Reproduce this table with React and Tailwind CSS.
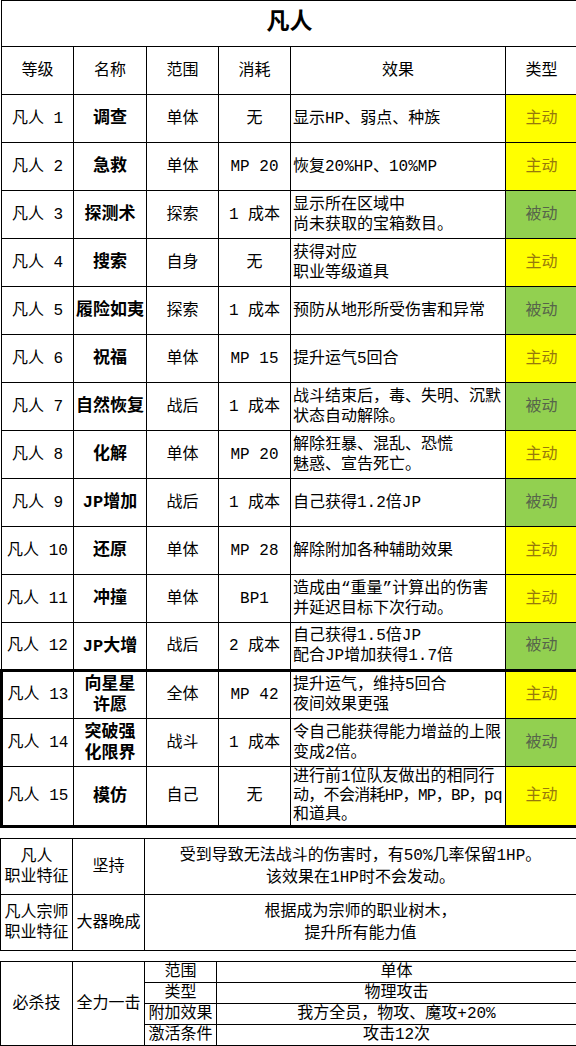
import React from 'react';

const skills = [
    { lv: 1, name: ['调查'], range: '单体', cost: '无', effect: ['显示HP、弱点、种族'], type: '主动' },
    { lv: 2, name: ['急救'], range: '单体', cost: 'MP 20', effect: ['恢复20%HP、10%MP'], type: '主动' },
    { lv: 3, name: ['探测术'], range: '探索', cost: '1 成本', effect: ['显示所在区域中', '尚未获取的宝箱数目。'], type: '被动' },
    { lv: 4, name: ['搜索'], range: '自身', cost: '无', effect: ['获得对应', '职业等级道具'], type: '主动' },
    { lv: 5, name: ['履险如夷'], range: '探索', cost: '1 成本', effect: ['预防从地形所受伤害和异常'], type: '被动' },
    { lv: 6, name: ['祝福'], range: '单体', cost: 'MP 15', effect: ['提升运气5回合'], type: '主动' },
    { lv: 7, name: ['自然恢复'], range: '战后', cost: '1 成本', effect: ['战斗结束后，毒、失明、沉默', '状态自动解除。'], type: '被动' },
    { lv: 8, name: ['化解'], range: '单体', cost: 'MP 20', effect: ['解除狂暴、混乱、恐慌', '魅惑、宣告死亡。'], type: '主动' },
    { lv: 9, name: ['JP增加'], range: '战后', cost: '1 成本', effect: ['自己获得1.2倍JP'], type: '被动' },
    { lv: 10, name: ['还原'], range: '单体', cost: 'MP 28', effect: ['解除附加各种辅助效果'], type: '主动' },
    { lv: 11, name: ['冲撞'], range: '单体', cost: 'BP1', effect: ['造成由“重量”计算出的伤害', '并延迟目标下次行动。'], type: '主动' },
    { lv: 12, name: ['JP大增'], range: '战后', cost: '2 成本', effect: ['自己获得1.5倍JP', '配合JP增加获得1.7倍'], type: '被动' },
    { lv: 13, name: ['向星星', '许愿'], range: '全体', cost: 'MP 42', effect: ['提升运气，维持5回合', '夜间效果更强'], type: '主动' },
    { lv: 14, name: ['突破强', '化限界'], range: '战斗', cost: '1 成本', effect: ['令自己能获得能力增益的上限', '变成2倍。'], type: '被动' },
    { lv: 15, name: ['模仿'], range: '自己', cost: '无', effect: ['进行前1位队友做出的相同行', '动，不会消耗HP，MP，BP，pq', '和道具。'], type: '主动' },
];

const font = { fontFamily: '"Liberation Mono", "Noto Sans CJK SC", monospace' };

const SkillRow = ({ s }) => {
    const top = s.lv === 13 ? 'border-t-[3px]' : '';
    const bottom = s.lv === 15 ? 'border-b-[3px]' : '';
    const height = s.lv === 15 ? 'h-[60px]' : 'h-[48px]';
    const active = s.type === '主动';
    return (
        <tr className={height}>
            <td className={`border border-black text-center ${top} ${bottom} ${s.lv >= 13 ? 'border-l-[3px]' : ''}`}>凡人 {s.lv}</td>
            <td className={`border border-black text-center text-[17px] font-bold leading-[21px] ${top} ${bottom}`}>
                {s.name.map((n, i) => <div key={i}>{n}</div>)}
            </td>
            <td className={`border border-black text-center ${top} ${bottom}`}>{s.range}</td>
            <td className={`border border-black text-center ${top} ${bottom}`}>{s.cost}</td>
            <td className={`border border-black pl-[2px] whitespace-nowrap overflow-hidden ${s.lv === 15 ? 'leading-[19px]' : 'leading-[20px]'} ${top} ${bottom}`}>
                {s.effect.map((e, i) => (
                    <div key={i} className={s.lv === 15 && i === 1 ? 'tracking-[-0.7px]' : ''}>{e}</div>
                ))}
            </td>
            <td className={`border border-black text-center ${top} ${bottom} ${active ? 'bg-[#ffff00] text-[#97790c]' : 'bg-[#92d050] text-[#56644a]'}`}>{s.type}</td>
        </tr>
    );
};

const App = () => {
    return (
        <div className="w-[576px] bg-white text-black text-[16px] overflow-hidden" style={font}>
            <table className="w-[576px] table-fixed border-collapse">
                <colgroup>
                    <col className="w-[72px]" />
                    <col className="w-[73px]" />
                    <col className="w-[72px]" />
                    <col className="w-[72px]" />
                    <col className="w-[215px]" />
                    <col className="w-[72px]" />
                </colgroup>
                <tbody>
                    <tr className="h-[46px]">
                        <td colSpan={6} className="border border-black text-center text-[23px] font-bold">凡人</td>
                    </tr>
                    <tr className="h-[48px]">
                        <td className="border border-black text-center">等级</td>
                        <td className="border border-black text-center">名称</td>
                        <td className="border border-black text-center">范围</td>
                        <td className="border border-black text-center">消耗</td>
                        <td className="border border-black text-center">效果</td>
                        <td className="border border-black text-center">类型</td>
                    </tr>
                    {skills.map(s => <SkillRow key={s.lv} s={s} />)}
                </tbody>
            </table>

            <table className="mt-[10px] w-[576px] table-fixed border-collapse">
                <colgroup>
                    <col className="w-[72px]" />
                    <col className="w-[72px]" />
                    <col className="w-[432px]" />
                </colgroup>
                <tbody>
                    <tr className="h-[56px]">
                        <td className="border border-black text-center leading-[20px]">凡人<br />职业特征</td>
                        <td className="border border-black text-center">坚持</td>
                        <td className="border border-black text-center leading-[22px]">受到导致无法战斗的伤害时，有50%几率保留1HP。<br />该效果在1HP时不会发动。</td>
                    </tr>
                    <tr className="h-[56px]">
                        <td className="border border-black text-center leading-[20px]">凡人宗师<br />职业特征</td>
                        <td className="border border-black text-center">大器晚成</td>
                        <td className="border border-black text-center leading-[22px]">根据成为宗师的职业树木，<br />提升所有能力值</td>
                    </tr>
                </tbody>
            </table>

            <table className="mt-[10px] w-[576px] table-fixed border-collapse leading-[20px]">
                <colgroup>
                    <col className="w-[72px]" />
                    <col className="w-[72px]" />
                    <col className="w-[72px]" />
                    <col className="w-[360px]" />
                </colgroup>
                <tbody>
                    <tr className="h-[21px]">
                        <td rowSpan={4} className="border border-black text-center">必杀技</td>
                        <td rowSpan={4} className="border border-black text-center">全力一击</td>
                        <td className="border border-black text-center">范围</td>
                        <td className="border border-black text-center">单体</td>
                    </tr>
                    <tr className="h-[21px]">
                        <td className="border border-black text-center">类型</td>
                        <td className="border border-black text-center">物理攻击</td>
                    </tr>
                    <tr className="h-[21px]">
                        <td className="border border-black text-center">附加效果</td>
                        <td className="border border-black text-center">我方全员，物攻、魔攻+20%</td>
                    </tr>
                    <tr className="h-[21px]">
                        <td className="border border-black text-center">激活条件</td>
                        <td className="border border-black text-center">攻击12次</td>
                    </tr>
                </tbody>
            </table>
        </div>
    );
};

export default App;
